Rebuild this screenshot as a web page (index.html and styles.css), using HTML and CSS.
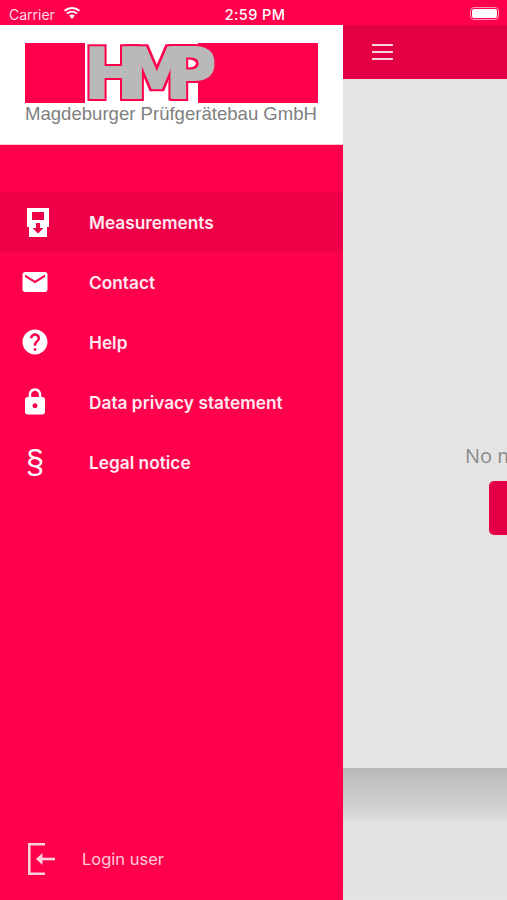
FILE: index.html
```html
<!DOCTYPE html>
<html lang="en">
<head>
    <meta charset="UTF-8">
    <meta name="viewport" content="width=device-width, initial-scale=1.0">
    <title>HMP Measurements</title>
    <link rel="stylesheet" href="styles.css">
</head>
<body>

    <div class="statusbar">
        <div class="status-left">
            <span>Carrier</span>
            <svg class="wifi" width="18" height="13" viewBox="0 0 18 13">
                <path d="M9 13L6.2 9.6a4.4 4.4 0 0 1 5.6 0z" fill="#fff"/>
                <path d="M1.5 4.8a11.6 11.6 0 0 1 15 0M4 7.6a7.8 7.8 0 0 1 10 0" fill="none" stroke="#fff" stroke-width="2"/>
            </svg>
        </div>
        <div class="status-time">2:59 PM</div>
        <div class="battery"><div class="battery-level"></div></div>
    </div>

    <div class="screen">
        <nav class="drawer">
            <div class="brand">
                <svg class="logo" width="294" height="84" viewBox="0 0 294 84">
                    <defs>
                        <filter id="logoOutline" x="-10%" y="-20%" width="120%" height="140%" color-interpolation-filters="sRGB">
                            <feMorphology in="SourceAlpha" operator="dilate" radius="3.2" result="outer"/>
                            <feFlood flood-color="#ff004d"/>
                            <feComposite in2="outer" operator="in" result="outline"/>
                            <feMorphology in="SourceAlpha" operator="dilate" radius="1.4" result="inner"/>
                            <feFlood flood-color="#b9b9b9"/>
                            <feComposite in2="inner" operator="in" result="letters"/>
                            <feMerge>
                                <feMergeNode in="outline"/>
                                <feMergeNode in="letters"/>
                            </feMerge>
                        </filter>
                    </defs>
                    <rect x="0" y="0" width="60" height="60" fill="#ff004d"/>
                    <rect x="173" y="0" width="120" height="60" fill="#ff004d"/>
                    <text class="logo-mark" x="59 97 140" y="55" filter="url(#logoOutline)">HMP</text>
                    <text class="logo-name" x="0" y="77" textLength="292" lengthAdjust="spacingAndGlyphs">Magdeburger Prüfgerätebau GmbH</text>
                </svg>
            </div>

            <ul class="menu">
                <li class="menu-item active">
                    <span class="menu-icon">
                        <svg class="device-icon" width="22" height="29" viewBox="0 0 22 29">
                            <path fill-rule="evenodd" fill="#fff" d="M0 0h22v19h-2v10H2V19H0zM5 4v8h12V4z"/>
                            <path fill="#ee0048" d="M9 15h4v5h3.5L11 25.5 5.500 20H9z"/>
                        </svg>
                    </span>
                    Measurements
                </li>
                <li class="menu-item">
                    <span class="menu-icon">
                        <svg width="30" height="30" viewBox="0 0 24 24"><path fill="#fff" d="M20 4H4c-1.1 0-2 .9-2 2v12c0 1.1.9 2 2 2h16c1.1 0 2-.9 2-2V6c0-1.1-.9-2-2-2zm0 4l-8 5-8-5V6l8 5 8-5v2z"/></svg>
                    </span>
                    Contact
                </li>
                <li class="menu-item">
                    <span class="menu-icon">
                        <svg width="30" height="30" viewBox="0 0 24 24"><path fill="#fff" d="M12 2C6.48 2 2 6.48 2 12s4.48 10 10 10 10-4.48 10-10S17.52 2 12 2zm1 17h-2v-2h2v2zm2.070-7.750l-.9.92C13.45 12.9 13 13.5 13 15h-2v-.5c0-1.1.45-2.1 1.170-2.830l1.240-1.260c.37-.36.59-.86.59-1.410 0-1.100-.9-2-2-2s-2 .9-2 2H8c0-2.210 1.790-4 4-4s4 1.790 4 4c0 .88-.36 1.680-.93 2.250z"/></svg>
                    </span>
                    Help
                </li>
                <li class="menu-item">
                    <span class="menu-icon">
                        <svg width="30" height="30" viewBox="0 0 24 24"><path fill="#fff" d="M18 8h-1V6c0-2.760-2.240-5-5-5S7 3.240 7 6v2H6c-1.100 0-2 .9-2 2v10c0 1.100.9 2 2 2h12c1.100 0 2-.9 2-2V10c0-1.100-.9-2-2-2zm-6 9c-1.100 0-2-.9-2-2s.9-2 2-2 2 .9 2 2-.9 2-2 2zm3.100-9H8.900V6c0-1.710 1.390-3.100 3.100-3.100 1.710 0 3.100 1.390 3.100 3.100v2z"/></svg>
                    </span>
                    Data privacy statement
                </li>
                <li class="menu-item">
                    <span class="menu-icon section-sign">§</span>
                    Legal notice
                </li>
            </ul>

            <div class="login">
                <svg width="28" height="32" viewBox="0 0 28 32">
                    <path d="M17 1.300H1.300v29.400H17" fill="none" stroke="#ffd0de" stroke-width="2.600"/>
                    <path d="M27 16H12" fill="none" stroke="#ffd0de" stroke-width="2.600"/>
                    <path d="M8 16l6.500-6v12z" fill="#ffd0de"/>
                </svg>
                <span>Login user</span>
            </div>
        </nav>

        <main class="main">
            <header class="topbar">
                <div class="hamburger"><span></span><span></span><span></span></div>
            </header>
            <div class="content">
                <p class="empty-text">No measurements available</p>
                <div class="empty-button"></div>
            </div>
            <div class="bottom-shade"></div>
        </main>
    </div>

</body>
</html>
```

FILE: styles.css
```css
/* page */
html, body {
    margin: 0;
    height: 100%;
}
body {
    width: 507px;
    height: 900px;
    overflow: hidden;
    display: flex;
    flex-direction: column;
    background: #ff004d;
    font-family: 'Inter', 'Liberation Sans', sans-serif;
}

/* status bar */
.statusbar {
    height: 25px;
    flex: none;
    display: flex;
    align-items: center;
    justify-content: space-between;
    padding: 3px 8px 0 9px;
    box-sizing: border-box;
    position: relative;
    color: #fff;
    font-size: 14px;
}
.status-left {
    display: flex;
    align-items: center;
    gap: 8px;
    color: #ffd9e4;
}
.wifi {
    margin-top: -4px;
}
.status-time {
    position: absolute;
    left: 3px;
    right: 0;
    text-align: center;
    font-weight: 500;
    font-size: 14.5px;
    letter-spacing: 0.4px;
}
.battery {
    width: 29px;
    height: 13px;
    box-sizing: border-box;
    border: 1px solid #ff9ab8;
    border-radius: 4px;
    padding: 1px;
    margin-top: -2px;
}
.battery-level {
    height: 100%;
    background: #fff;
    border-radius: 2px;
}

/* layout */
.screen {
    flex: 1;
    display: flex;
    min-height: 0;
}

/* drawer */
.drawer {
    width: 343px;
    flex: none;
    display: flex;
    flex-direction: column;
    background: #ff004d;
    color: #fff;
}
.brand {
    height: 120px;
    box-sizing: border-box;
    padding: 18px 0 0 25px;
    background: #fff;
    border-bottom: 1px solid #ffc4d5;
}
.logo {
    display: block;
}
.logo-mark {
    font-family: 'DejaVu Sans', sans-serif;
    font-weight: 700;
    font-size: 70px;
}
.logo-name {
    font-family: 'Liberation Sans', sans-serif;
    font-size: 19px;
    fill: #808080;
}
.menu {
    list-style: none;
    margin: 47px 0 0 0;
    padding: 0;
}
.menu-item {
    height: 60px;
    display: flex;
    align-items: center;
    font-size: 17.300px;
    font-weight: 600;
    color: #ffe9ef;
}
.menu-item.active {
    background: #ee0048;
}
.menu-icon {
    width: 70px;
    margin-right: 19px;
    display: flex;
    justify-content: center;
    align-items: center;
}
.device-icon {
    margin-left: 6px;
}
.section-sign {
    font-family: 'Liberation Sans', sans-serif;
    font-weight: 400;
    font-size: 33px;
    color: #fff;
}
.login {
    margin-top: auto;
    height: 82px;
    box-sizing: border-box;
    padding: 0 0 0 28px;
    display: flex;
    align-items: center;
    gap: 26px;
    font-size: 16.500px;
    color: #ffc9d9;
}

/* main panel */
.main {
    flex: 1;
    min-width: 0;
    overflow: hidden;
    display: flex;
    flex-direction: column;
    background: #e4e4e4;
}
.topbar {
    height: 54px;
    flex: none;
    display: flex;
    align-items: center;
    padding-left: 29px;
    background: #e30045;
}
.hamburger {
    width: 21px;
    display: flex;
    flex-direction: column;
    gap: 4.500px;
}
.hamburger span {
    height: 2.500px;
    background: #fbd3df;
}
.content {
    flex: 1;
    padding: 364px 0 0 122px;
    box-sizing: border-box;
}
.empty-text {
    margin: 0;
    width: 300px;
    font-family: 'Open Sans', sans-serif;
    font-size: 20px;
    line-height: 26px;
    color: #8a8a8a;
}
.empty-button {
    width: 120px;
    height: 54px;
    margin: 12px 0 0 24px;
    border-radius: 5px;
    background: #e30045;
}
.bottom-shade {
    height: 132px;
    flex: none;
    background: linear-gradient(#b9b9b9, #d2d2d2 32%, #e2e2e2 42%, #e4e4e4);
}
```
